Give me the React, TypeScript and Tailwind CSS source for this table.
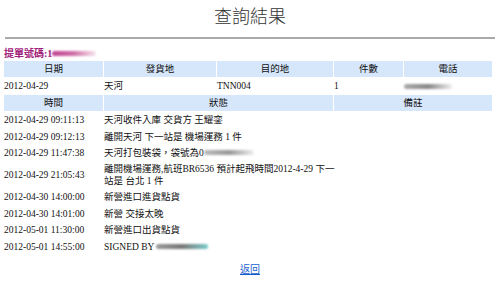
const font = { fontFamily: '"Liberation Serif", "Noto Sans CJK TC", serif' };

function Smudge({ className }: { className: string }) {
  return <span className={`inline-block align-[1px] rounded-full blur-[1px] ${className}`} />;
}

const events: { time: string; status: React.ReactNode; tall?: boolean }[] = [
  { time: "2012-04-29 09:11:13", status: "天河收件入庫 交貨方 王耀銮" },
  { time: "2012-04-29 09:12:13", status: "離開天河 下一站是 機場運務 1 件" },
  {
    time: "2012-04-29 11:47:38",
    status: (
      <>
        天河打包裝袋，袋號為0
        <Smudge className="w-[50px] h-[5px] bg-gradient-to-r from-[#bbb] via-[#999] to-[#eee]" />
      </>
    ),
  },
  {
    time: "2012-04-29 21:05:43",
    status: (
      <>
        離開機場運務,航班BR6536 預計起飛時間2012-4-29 下一
        <br />
        站是 台北 1 件
      </>
    ),
    tall: true,
  },
  { time: "2012-04-30 14:00:00", status: "新營進口進貨點貨" },
  { time: "2012-04-30 14:01:00", status: "新營 交接太晚" },
  { time: "2012-05-01 11:30:00", status: "新營進口出貨點貨" },
  {
    time: "2012-05-01 14:55:00",
    status: (
      <>
        SIGNED BY{" "}
        <Smudge className="w-[52px] h-[5px] bg-gradient-to-r from-[#999] via-[#777] to-[#7cc]" />
      </>
    ),
  },
];

export default function App() {
  return (
    <div className="w-[500px] h-[283px] bg-white text-[#111] px-[4px] overflow-hidden" style={font}>
      <h1
        className="text-center text-[18px] leading-[24px] pt-[3px] text-[#333] font-light"
        style={{ fontFamily: '"Noto Sans CJK TC", sans-serif' }}
      >
        查詢結果
      </h1>
      <div className="mt-[10px] mx-[1px] h-[2px] bg-[#aaa]" />

      <div className="mt-[8px] h-[12px] flex items-center text-[10px] font-bold text-[#a0207a]">
        提單號碼:1
        <Smudge className="w-[44px] h-[5px] bg-gradient-to-r from-[#c04090] via-[#d070a8] to-[#f6e6ef]" />
      </div>

      <div className="w-[490px] -ml-[1px] mt-[1px] text-[9.5px] leading-[10px]">
        <div className="grid grid-cols-[99px_112px_116px_69px_1fr] gap-[1px] p-[1px]">
          <div className="h-[16px] flex items-center justify-center bg-[#d6e6fb]">日期</div>
          <div className="h-[16px] flex items-center justify-center bg-[#d6e6fb]">發貨地</div>
          <div className="h-[16px] flex items-center justify-center bg-[#d6e6fb]">目的地</div>
          <div className="h-[16px] flex items-center justify-center bg-[#d6e6fb]">件數</div>
          <div className="h-[16px] flex items-center justify-center bg-[#d6e6fb]">電話</div>
          <div className="h-[16px] flex items-center">2012-04-29</div>
          <div className="h-[16px] flex items-center">天河</div>
          <div className="h-[16px] flex items-center">TNN004</div>
          <div className="h-[16px] flex items-center">1</div>
          <div className="h-[16px] flex items-center">
            <Smudge className="w-[48px] h-[5px] bg-gradient-to-r from-[#aaa] via-[#888] to-[#eee]" />
          </div>
        </div>

        <div className="grid grid-cols-[99px_229px_1fr] gap-x-[1px] px-[1px]">
          <div className="h-[16px] mb-[1px] flex items-center justify-center bg-[#d6e6fb]">時間</div>
          <div className="h-[16px] mb-[1px] flex items-center justify-center bg-[#d6e6fb]">狀態</div>
          <div className="h-[16px] mb-[1px] flex items-center justify-center bg-[#d6e6fb]">備註</div>
          {events.map((e) => (
            <div key={e.time} className="contents">
              <div className={`flex items-center whitespace-nowrap ${e.tall ? "h-[28px]" : "h-[16.4px]"}`}>{e.time}</div>
              <div className={`flex items-center whitespace-nowrap leading-[12px] ${e.tall ? "h-[28px]" : "h-[16.4px]"}`}>
                <div>{e.status}</div>
              </div>
              <div />
            </div>
          ))}
        </div>
      </div>

      <div className="mt-[7px] text-center text-[10px]">
        <a href="#" className="text-[#1a5fd0] underline">
          返回
        </a>
      </div>
    </div>
  );
}
